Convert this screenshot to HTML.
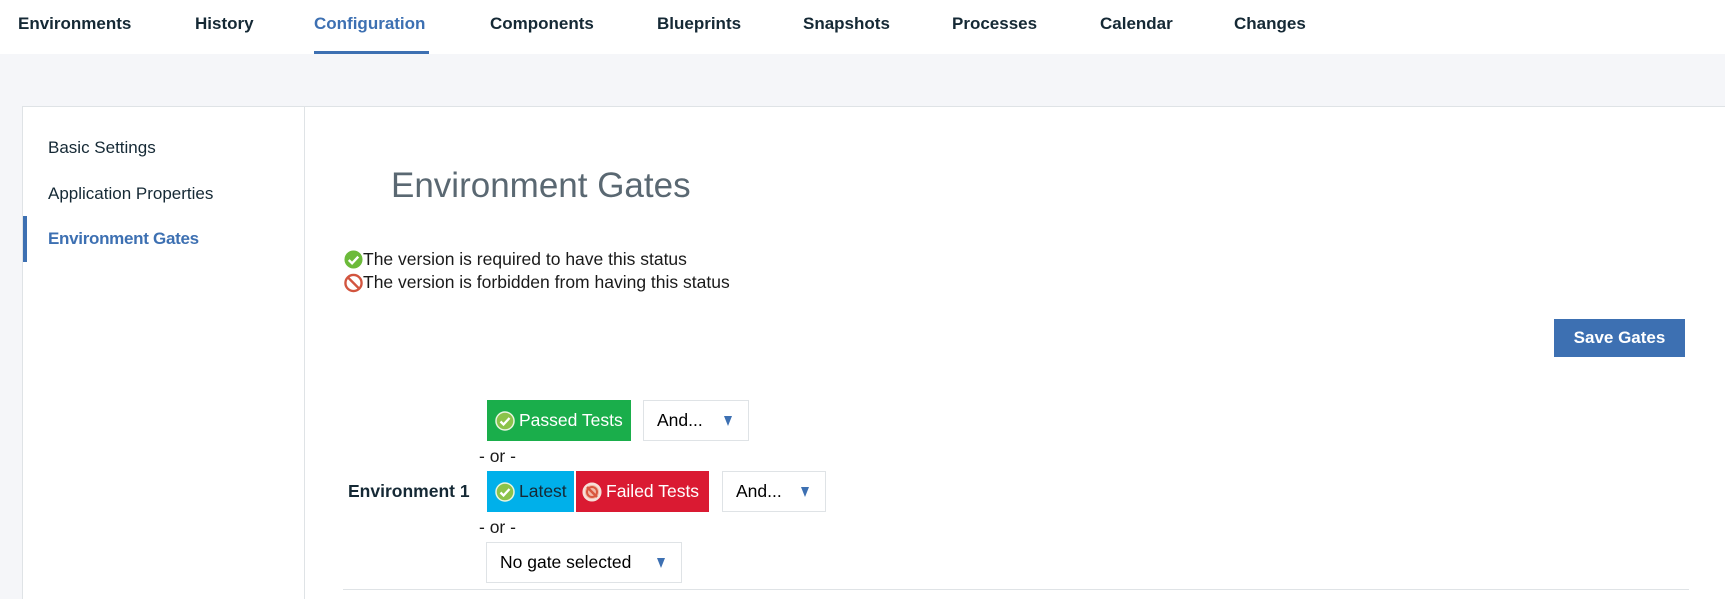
<!DOCTYPE html>
<html><head><style>
*{margin:0;padding:0;box-sizing:border-box}
body{width:1725px;height:599px;overflow:hidden;background:#f5f6f9;font-family:"Liberation Sans",Arial,sans-serif;position:relative;color:#1a1a1a}
.a{position:absolute;white-space:nowrap}
.nav{position:absolute;left:0;top:0;width:1725px;height:54px;background:#fff}
.nav span{position:absolute;top:14px;font-weight:bold;font-size:17px;color:#152935}
.panel{position:absolute;left:22px;top:106px;width:1703px;height:493px;background:#fff;border:1px solid #dfe3e6;border-right:none;border-bottom:none}
.side{position:absolute;left:304px;top:106px;width:1px;height:493px;background:#dfe3e6}
.sb{font-size:17px;color:#152935}
.badge{position:absolute;height:41px;display:flex;align-items:center;font-size:17.5px;color:#fff;padding-left:8px}
.dd{position:absolute;height:41px;border:1px solid #dfe3e6;background:#fff;font-size:17.5px;display:flex;align-items:center;padding-left:13px;color:#000}
.dd i{position:absolute;right:16px;top:15px;width:0;height:0;border-left:4px solid transparent;border-right:4px solid transparent;border-top:10px solid #3d70b2}
svg{display:block;margin-right:4px;flex:none}
</style></head><body>
<div class="nav">
<span style="left:18px">Environments</span>
<span style="left:195px">History</span>
<span style="left:314px;color:#3d70b2">Configuration</span>
<span style="left:490px">Components</span>
<span style="left:657px">Blueprints</span>
<span style="left:803px">Snapshots</span>
<span style="left:952px">Processes</span>
<span style="left:1100px">Calendar</span>
<span style="left:1234px">Changes</span>
<div class="a" style="left:314px;top:51px;width:115px;height:3px;background:#3d70b2"></div>
</div>
<div class="panel"></div>
<div class="side"></div>
<div class="a sb" style="left:48px;top:138px">Basic Settings</div>
<div class="a sb" style="left:48px;top:184px">Application Properties</div>
<div class="a sb" style="left:48px;top:229px;color:#3d70b2;font-weight:bold;letter-spacing:-0.3px">Environment Gates</div>
<div class="a" style="left:23px;top:216px;width:4px;height:46px;background:#3d70b2"></div>
<div class="a" style="left:391px;top:166px;font-size:35px;color:#5a6872">Environment Gates</div>
<div class="a" style="left:344px;top:249px;font-size:17.5px;display:flex;align-items:center">
<svg width="19" height="19" viewBox="0 0 20 20" style="margin:0"><circle cx="10" cy="10" r="9.5" fill="#6cba3a"/><path d="M5 10.5l3.5 3.5L15 7" stroke="#fff" stroke-width="2.5" fill="none"/></svg>The version is required to have this status</div>
<div class="a" style="left:344px;top:272px;font-size:17.5px;display:flex;align-items:center">
<svg width="19" height="20" viewBox="0 0 20 20" style="margin:0"><circle cx="10" cy="10" r="8.5" stroke="#d2553f" stroke-width="2.5" fill="none"/><path d="M4.5 4.5l11 11" stroke="#d2553f" stroke-width="2.5"/></svg>The version is forbidden from having this status</div>
<div class="a" style="left:1554px;top:319px;width:131px;height:38px;background:#3d70b2;color:#fff;font-weight:bold;font-size:17px;display:flex;align-items:center;justify-content:center">Save Gates</div>

<div class="badge" style="left:487px;top:400px;width:144px;background:#1aae4b">
<svg width="20" height="20" viewBox="0 0 20 20"><circle cx="10" cy="10" r="9" fill="#8bc34a" stroke="#e8f5e0" stroke-width="1.5"/><path d="M5.5 10.5l3 3L14.5 7" stroke="#fff" stroke-width="2.3" fill="none"/></svg>Passed Tests</div>
<div class="dd" style="left:643px;top:400px;width:106px">And...<i></i></div>
<div class="a" style="left:479px;top:446px;font-size:17.5px">- or -</div>
<div class="a" style="left:348px;top:481px;font-size:17.5px;font-weight:bold;color:#152935">Environment 1</div>
<div class="badge" style="left:487px;top:471px;width:87px;background:#00b0ea;color:#152935">
<svg width="20" height="20" viewBox="0 0 20 20"><circle cx="10" cy="10" r="9" fill="#8bc34a" stroke="#e8f5e0" stroke-width="1.5"/><path d="M5.5 10.5l3 3L14.5 7" stroke="#fff" stroke-width="2.3" fill="none"/></svg>Latest</div>
<div class="badge" style="left:576px;top:471px;width:133px;background:#da1a32;padding-left:6px">
<svg width="20" height="20" viewBox="0 0 20 20"><circle cx="10" cy="10" r="8.3" fill="#f3b9a8" stroke="#f7e0d8" stroke-width="2.5"/><circle cx="10" cy="10" r="6" fill="#d9573e"/><circle cx="10" cy="10" r="4" fill="#f3b9a8"/><path d="M5 5l10 10" stroke="#d9573e" stroke-width="2.5"/></svg>Failed Tests</div>
<div class="dd" style="left:722px;top:471px;width:104px">And...<i></i></div>
<div class="a" style="left:479px;top:517px;font-size:17.5px">- or -</div>
<div class="dd" style="left:486px;top:542px;width:196px">No gate selected<i></i></div>
<div class="a" style="left:343px;top:589px;width:1346px;height:1px;background:#dfe3e6"></div>
</body></html>
